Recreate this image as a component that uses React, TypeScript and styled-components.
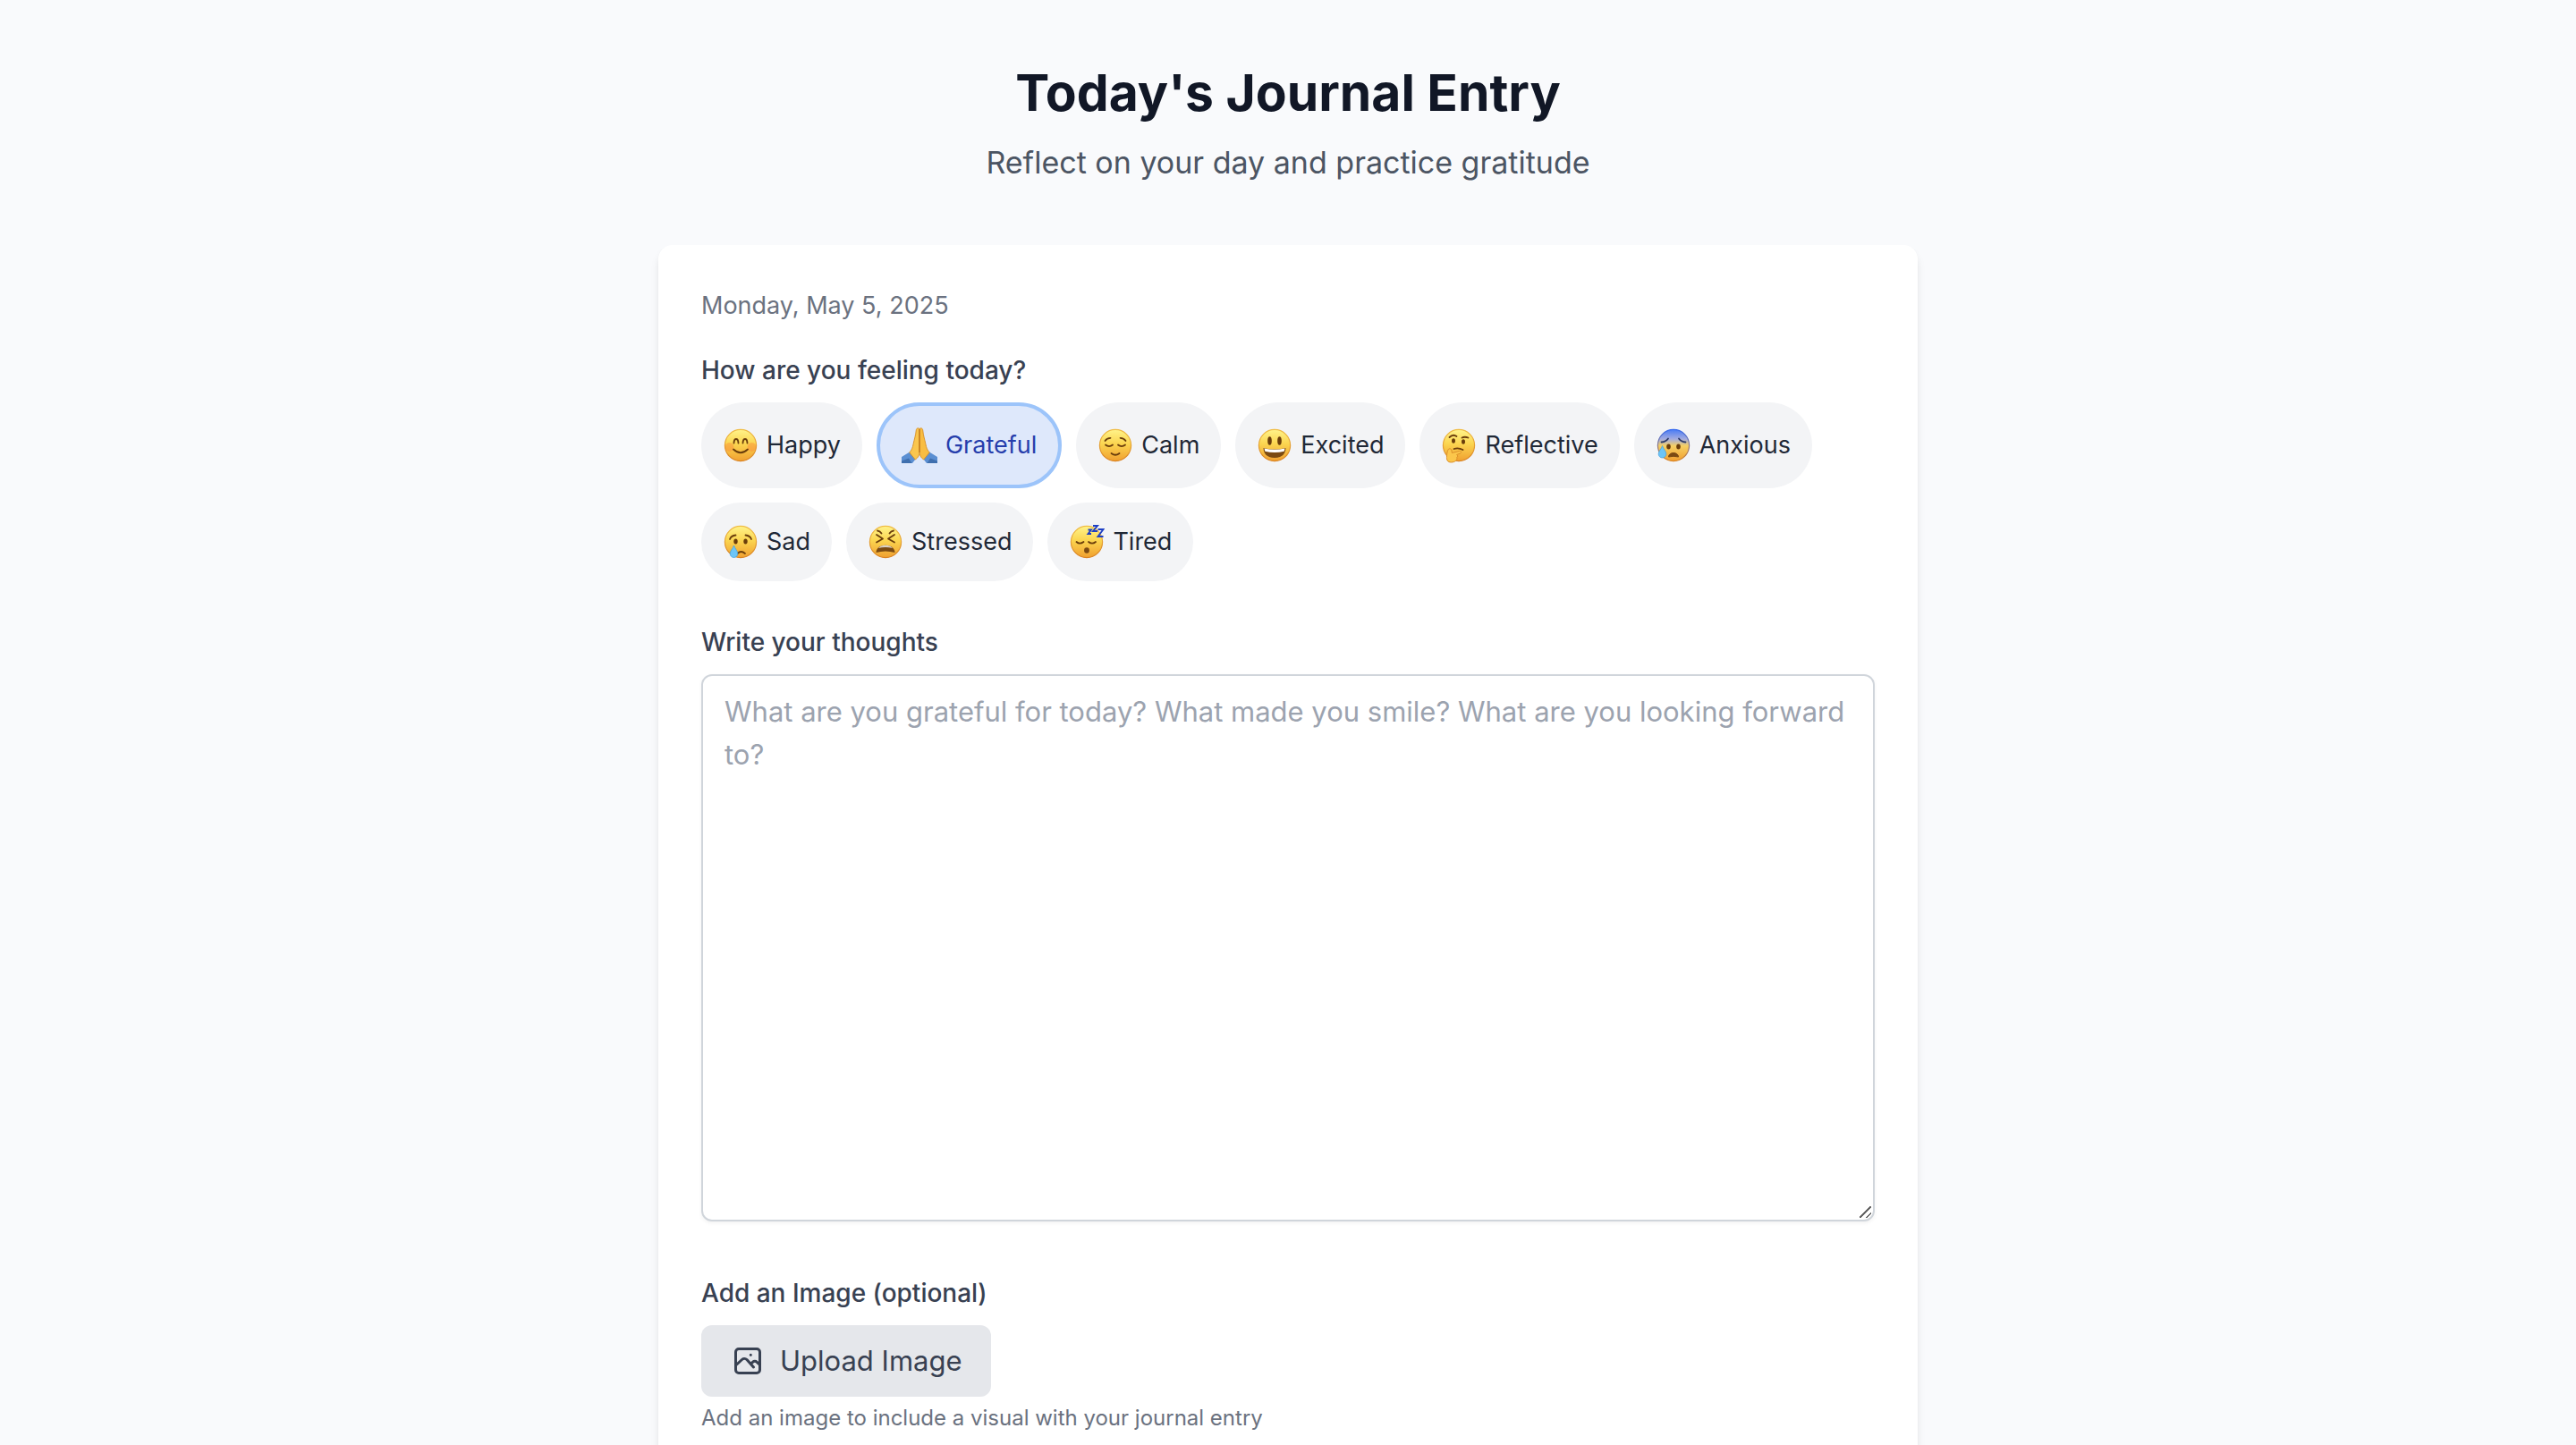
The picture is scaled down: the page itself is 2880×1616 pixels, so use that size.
import React from 'react';
import styled, { createGlobalStyle } from 'styled-components';

const Global = createGlobalStyle`
  *, *::before, *::after { box-sizing: border-box; }
  body { margin: 0; background: #f9fafc; font-family: Inter, "Liberation Sans", sans-serif; -webkit-font-smoothing: antialiased; }
  h1, p { margin: 0; }
  button, textarea { font: inherit; }
`;

const Page = styled.main`
  height: 100vh;
  overflow: hidden;
  display: flex;
  flex-direction: column;
  align-items: center;
  padding: 68px 64px 0;
  background: #f9fafc;
`;

const Header = styled.header`
  display: flex;
  flex-direction: column;
  align-items: center;
  gap: 14px;
  margin-bottom: 64px;
`;

const Title = styled.h1`
  font-size: 57px;
  line-height: 72px;
  font-weight: 700;
  color: #111726;
`;

const Subtitle = styled.p`
  font-size: 34px;
  line-height: 56px;
  color: #4c5563;
`;

const Card = styled.form`
  flex: 1;
  width: 100%;
  max-width: 1408px;
  padding: 48px;
  background: #fff;
  border-radius: 16px 16px 0 0;
  box-shadow: 0 8px 12px -2px rgba(0, 0, 0, 0.1), 0 4px 8px -4px rgba(0, 0, 0, 0.1);
`;

const DateLine = styled.p`
  margin-bottom: 32px;
  font-size: 27px;
  line-height: 40px;
  color: #6b7280;
`;

const Field = styled.div`
  margin-bottom: 48px;
`;

const Label = styled.label`
  display: block;
  margin-bottom: 16px;
  font-size: 28px;
  line-height: 40px;
  font-weight: 500;
  color: #384152;
`;

const Moods = styled.div`
  display: flex;
  flex-wrap: wrap;
  gap: 16px;
`;

const Mood = styled.button<{ $active: boolean }>`
  display: flex;
  align-items: center;
  gap: 9px;
  min-height: 88px;
  padding: 16px 24px;
  border: ${(p) => (p.$active ? '4px solid #9cc4fa' : '0')};
  border-radius: 48px;
  background: ${(p) => (p.$active ? '#dee8fb' : '#f3f4f6')};
  color: ${(p) => (p.$active ? '#263eac' : '#1f2836')};
  font-size: 27px;
  line-height: 56px;
  cursor: pointer;
`;

const Emoji = styled.svg`
  width: 40px;
  height: 40px;
  flex: none;
`;

const Thoughts = styled.textarea`
  display: block;
  width: 100%;
  margin-bottom: 60px;
  padding: 16px 24px;
  border: 2px solid #d0d5db;
  border-radius: 12px;
  background: #fff;
  box-shadow: 0 2px 4px rgba(0, 0, 0, 0.05);
  font-size: 31px;
  line-height: 48px;
  color: #111726;
  resize: vertical;
  &::placeholder { color: #9ca3af; opacity: 1; }
  &::-webkit-resizer {
    background: linear-gradient(135deg, transparent 46%, #666 46% 54%, transparent 54% 74%, #666 74% 82%, transparent 82%) 0 0 / 13px 13px no-repeat;
  }
`;

const Upload = styled.button`
  display: flex;
  align-items: center;
  gap: 16px;
  padding: 16px 32px;
  border: 0;
  border-radius: 12px;
  background: #e5e7eb;
  color: #384152;
  font-size: 31px;
  line-height: 48px;
  cursor: pointer;
`;

const UploadIcon = styled.svg`
  width: 40px;
  height: 40px;
`;

const Hint = styled.p`
  margin-top: 8px;
  font-size: 24px;
  line-height: 32px;
  color: #6b7280;
`;

const INK = '#6a3d0b';
const line = { fill: 'none', stroke: INK, strokeWidth: 1.8, strokeLinecap: 'round' as const, strokeLinejoin: 'round' as const };

const Tear = ({ x, y }: { x: number; y: number }) => (
  <path d={`M${x} ${y}c1 3.500 4.300 6 4.300 9.200a4.300 4.300 0 0 1-8.600 0c0-3.200 3.300-5.700 4.300-9.200z`} fill="#6cc5f7" stroke="#3f9fe0" strokeWidth=".7" />
);

const faces: Record<string, React.ReactNode> = {
  Happy: (
    <>
      <circle cx="7.500" cy="22" r="5" fill="#f9823a" opacity=".4" />
      <circle cx="32.500" cy="22" r="5" fill="#f9823a" opacity=".4" />
      <path d="M12.500 17.500c.3-6 4.700-6 5 0M22.500 17.500c.3-6 4.700-6 5 0M12 24.500q8 7.500 16 0" {...line} />
    </>
  ),
  Calm: (
    <>
      <path d="M8.500 15q2-3 6-3.200M31.500 15q-2-3-6-3.200M9 19.500q4 3.200 8 0M23 19.500q4 3.200 8 0M15.500 29q4.500 3.600 9 0" {...line} />
    </>
  ),
  Excited: (
    <>
      <ellipse cx="14.500" cy="15" rx="2.300" ry="4.800" fill={INK} />
      <ellipse cx="25.500" cy="15" rx="2.300" ry="4.800" fill={INK} />
      <path d="M7.500 23q12.500 3 25 0c0 7-5 11-12.500 11S7.500 30 7.500 23z" fill="#7b4a12" />
      <path d="M8.500 23.500q11.500 2.700 23 0l-.8 3.300q-10.700 2.400-21.400 0z" fill="#fff" />
    </>
  ),
  Reflective: (
    <>
      <ellipse cx="14" cy="15" rx="2" ry="2.800" fill={INK} />
      <ellipse cx="25" cy="16" rx="2" ry="2.800" fill={INK} />
      <path d="M9.500 11q4-4 8-1M23.500 11.500q3-1.500 7 0M14.500 24q5-1.600 10 1" {...line} />
      <path d="M9 24c1.500-.8 3 .5 3 2l.3 2.500 8-2c2.700-.5 3 1.800.8 2.700l-3.500 1.300c1.600.8 1.200 2.300.2 3 .8 3-2.300 5.500-6.300 5.500-4.500 0-5.300-3-5-7 .2-3.500 1-7.500 2.500-8z" fill="#fbc64b" stroke="#dc902a" strokeWidth="1" />
    </>
  ),
  Anxious: (
    <>
      <ellipse cx="14.500" cy="21.500" rx="2.300" ry="2.900" fill={INK} />
      <ellipse cx="25.500" cy="21.500" rx="2.300" ry="2.900" fill={INK} />
      <path d="M6.500 16.500q5-.5 7.500-4M33.500 16.500q-5-.5-7.500-4" {...line} stroke="#2c3a68" />
      <path d="M14.500 33c0-6 11-6 11 0q-5.500-1.500-11 0z" fill="#7b4a12" stroke="#7b4a12" strokeWidth="1" />
      <Tear x={7.5} y={20.5} />
    </>
  ),
  Sad: (
    <>
      <ellipse cx="14.500" cy="19.500" rx="2.200" ry="3" fill={INK} />
      <ellipse cx="25.500" cy="19.500" rx="2.200" ry="3" fill={INK} />
      <path d="M8 17q1.500-4 6.500-4.500M32 17q-1.500-4-6.500-4.500M16.500 33q4-4 8.500 0" {...line} />
      <Tear x={12.5} y={24} />
    </>
  ),
  Stressed: (
    <>
      <path d="M11 7.500q3 .5 4.500 3M29 7.500q-3 .5-4.500 3M10 12l7 4.500-7 4M30 12l-7 4.500 7 4" {...line} />
      <path d="M9.500 32c0-11 21-11 21 0q-10.500-3-21 0z" fill="#7b4a12" />
      <path d="M12 27c3-4.500 13-4.500 16 0q-8-2-16 0z" fill="#d8cfc6" />
    </>
  ),
  Tired: (
    <>
      <path d="M8.500 20q3.500 3.300 8 0M22 20q4 3.300 8 0" {...line} />
      <ellipse cx="20" cy="29.500" rx="2.900" ry="3.300" fill="#7b4a12" />
      <path d="M21.500 6.500h3.500l-3.500 4.500h3.500M27 2h5l-5 6h5M32.500 6h6l-6 8h6" fill="none" stroke="#1d3fc4" strokeWidth="1.900" />
    </>
  ),
};

const Hands = () => (
  <Emoji viewBox="0 0 40 40" aria-hidden="true">
    <path d="M0 33l9-5.500 7 7.500-4 5H0zM40 33l-9-5.500-7 7.500 4 5h12z" fill="#5b8fd2" />
    <path d="M0 37.500l8-3 3.500 5.500H0zM40 37.500l-8-3-3.500 5.500H40z" fill="#3f6fae" />
    <path d="M19.800 1.500c-1.500-1.500-3.300-.3-3.500 1.500-.6 6-2 10-3.200 15.500-.7 4-1.800 7-4.300 9.500l6.500 8c3.500-2.500 4.500-5 4.500-9z" fill="#fac64f" stroke="#d78f25" strokeWidth=".9" />
    <path d="M20.200 1.500c1.500-1.500 3.300-.3 3.500 1.500.6 6 2 10 3.200 15.500.7 4 1.800 7 4.300 9.500l-6.500 8c-3.500-2.500-4.500-5-4.500-9z" fill="#f8bd42" stroke="#d78f25" strokeWidth=".9" />
    <path d="M20 2v26" stroke="#b86f14" strokeWidth="1" />
  </Emoji>
);

const Face = ({ name }: { name: string }) => (
  <Emoji viewBox="0 0 40 40" aria-hidden="true">
    <defs>
      <linearGradient id={`skin-${name}`} x1="0" y1="0" x2="0" y2="1">
        {name === 'Anxious' ? (
          <>
            <stop offset="0" stopColor="#4a7cf5" />
            <stop offset=".3" stopColor="#a3ace0" />
            <stop offset=".52" stopColor="#f6cf62" />
          </>
        ) : (
          <>
            <stop offset="0" stopColor="#fff38a" />
            <stop offset=".45" stopColor="#fbd550" />
          </>
        )}
        <stop offset="1" stopColor="#f0a030" />
      </linearGradient>
      <linearGradient id={`rim-${name}`} x1="0" y1="0" x2="0" y2="1">
        <stop offset="0" stopColor={name === 'Anxious' ? '#3468ef' : '#f0bd45'} />
        <stop offset="1" stopColor="#d98222" />
      </linearGradient>
    </defs>
    <circle cx="20" cy="20" r="17.600" fill={`url(#skin-${name})`} stroke={`url(#rim-${name})`} strokeWidth="1.200" />
    {faces[name]}
  </Emoji>
);

const moods = ['Happy', 'Grateful', 'Calm', 'Excited', 'Reflective', 'Anxious', 'Sad', 'Stressed', 'Tired'];

export default function App() {
  const [mood, setMood] = React.useState('Grateful');
  return (
    <>
      <Global />
      <Page>
        <Header>
          <Title>Today's Journal Entry</Title>
          <Subtitle>Reflect on your day and practice gratitude</Subtitle>
        </Header>
        <Card>
          <DateLine>Monday, May 5, 2025</DateLine>
          <Field>
            <Label as="div" id="mood-label">How are you feeling today?</Label>
            <Moods role="group" aria-labelledby="mood-label">
              {moods.map((m) => (
                <Mood key={m} type="button" $active={m === mood} aria-pressed={m === mood} onClick={() => setMood(m)}>
                  {m === 'Grateful' ? <Hands /> : <Face name={m} />}
                  <span>{m}</span>
                </Mood>
              ))}
            </Moods>
          </Field>
          <Label htmlFor="thoughts">Write your thoughts</Label>
          <Thoughts
            id="thoughts"
            rows={12}
            placeholder="What are you grateful for today? What made you smile? What are you looking forward to?"
          />
          <Label as="div" id="image-label">Add an Image (optional)</Label>
          <Upload type="button" aria-describedby="image-label">
            <UploadIcon viewBox="0 0 40 40" fill="none" stroke="currentColor" strokeWidth="3" strokeLinecap="round" strokeLinejoin="round" aria-hidden="true">
              <rect x="6.500" y="6.500" width="27" height="27" rx="3.500" />
              <path d="M7 24.500l6.500-6a4 4 0 0 1 5.500 0l7.500 8.500M23.500 23.500l2-2.200a3.500 3.500 0 0 1 4.800 0l2.700 2.500M23.300 13.300h.02" />
            </UploadIcon>
            <span>Upload Image</span>
          </Upload>
          <Hint>Add an image to include a visual with your journal entry</Hint>
        </Card>
      </Page>
    </>
  );
}
